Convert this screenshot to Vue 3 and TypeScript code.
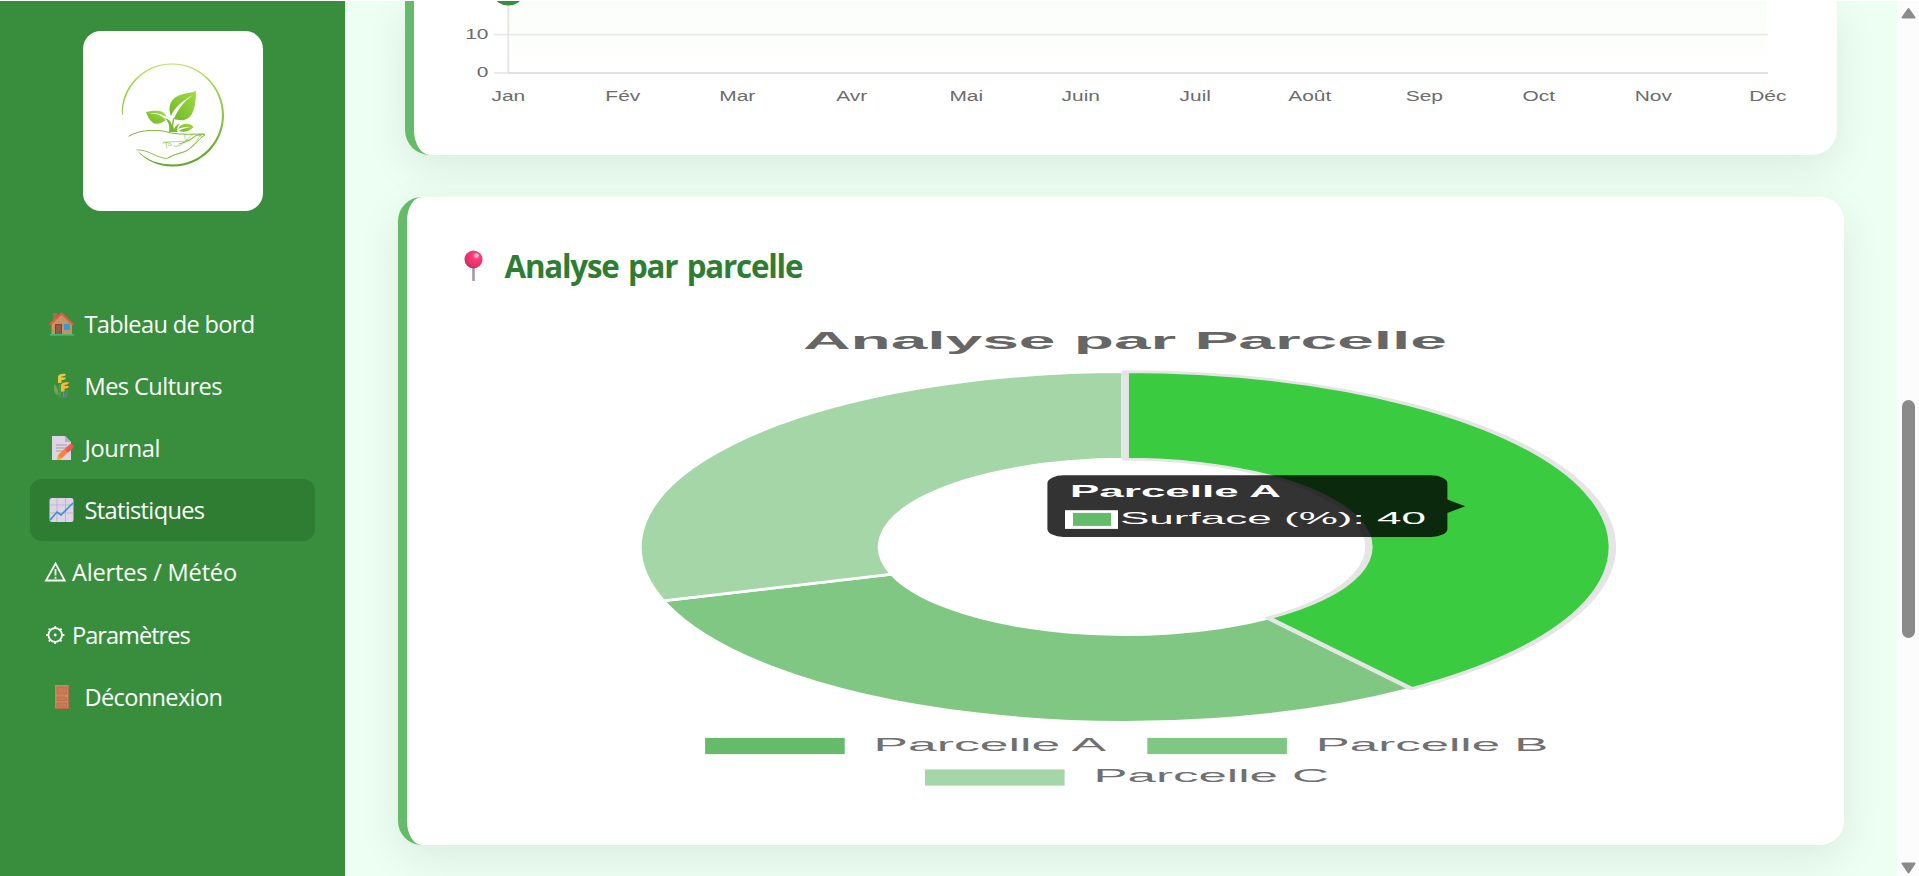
<script setup lang="ts">
interface MenuItem { id: string; label: string; spacing: number; plain?: boolean }
const menu: MenuItem[] = [
  { id: 'home', label: 'Tableau de bord', spacing: -0.66 },
  { id: 'wheat', label: 'Mes Cultures', spacing: -0.57 },
  { id: 'memo', label: 'Journal', spacing: -0.35 },
  { id: 'chart', label: 'Statistiques', spacing: -0.66 },
  { id: 'warn', label: 'Alertes / Météo', spacing: -0.2, plain: true },
  { id: 'gear', label: 'Paramètres', spacing: -1, plain: true },
  { id: 'door', label: 'Déconnexion', spacing: -0.66 },
]
const current = 'chart'
const months = ['Jan', 'Fév', 'Mar', 'Avr', 'Mai', 'Juin', 'Juil', 'Août', 'Sep', 'Oct', 'Nov', 'Déc']
const monthX = (i: number) => 94.3 + i * 114.5

const outer = 175.3
const inner = 87.7
function sector(from: number, to: number): string {
  const at = (r: number, t: number) => {
    const a = t * Math.PI * 2
    return `${(Math.sin(a) * r).toFixed(3)} ${(-Math.cos(a) * r).toFixed(3)}`
  }
  return `M${at(outer, from)}A${outer} ${outer} 0 0 1 ${at(outer, to)}L${at(inner, to)}A${inner} ${inner} 0 0 0 ${at(inner, from)}Z`
}
const slices = [
  { d: sector(0.4, 0.7), fill: '#81c784', stroke: '#fff' },
  { d: sector(0.7, 1), fill: '#a5d6a7', stroke: '#fff' },
  { d: sector(0, 0.4), fill: '#3bcb41', stroke: '#e5e5e5' },
]
const legend = [
  { name: 'Parcelle A', x: 298.1, y: 427.9, fill: '#66bb6a', w: 232.5 },
  { name: 'Parcelle B', x: 740.3, y: 427.9, fill: '#81c784', w: 232.5 },
  { name: 'Parcelle C', x: 518, y: 459.4, fill: '#a5d6a7', w: 235.5 },
]
</script>

<template>
  <div class="page">
    <aside class="sidebar">
      <div class="logo">
        <svg width="180" height="180" viewBox="0 0 180 180">
          <defs>
            <linearGradient id="ring" x1="0" y1="0" x2="0" y2="1">
              <stop offset="0" stop-color="#b6e35c" /><stop offset="1" stop-color="#5fa626" />
            </linearGradient>
            <linearGradient id="leaf" x1="1" y1="0" x2="0" y2="1">
              <stop offset="0" stop-color="#a4dc43" /><stop offset="1" stop-color="#6db529" />
            </linearGradient>
          </defs>
          <path fill="url(#ring)" d="M39 84C37 56 60 32.500 89 32.500C118 32.500 141 56 141 84C141 113 118 135.500 90 135.500C74 135.500 62 129 54 119.500C65 130 76 133.500 90 133.500C117 133.500 139 111 139 84C139 57 117 33.500 89 33.500C61 33.500 39.500 57 39.800 84Z" />
          <path fill="url(#leaf)" d="M113 60C113 76 110 87 101 89C97 89.500 94 89 91 88C94 80 100 71 110 64C99 70 91 77 88 85C84 76 88 67 97 64C103 62 108 62 113 60Z" />
          <path fill="url(#leaf)" d="M63 81C74 79 81 79 83.500 86C77 82 72 82 66 82C74 83 79 84 83 89C75 95 68 95 63 81Z" />
          <path fill="url(#leaf)" d="M110.500 96C107 92 99 91 95 98C99 96 103 96 107 96.500C102 97 98 98 96 100C101 102 107 100 110.500 96Z" />
          <path fill="#76bd2c" d="M86 101C87 94 85 90 82 87C86 88 88 91 89 94C89 90 90 87 92 86C90 92 90 95 91 98C93 94 95 93 97 93C94 95 94 98 94.500 101Z" />
          <g fill="none" stroke="#7dba38" stroke-width="1" stroke-linecap="round">
            <path d="M46 105C58 98 76 98 88 102C100 104 111 103 121 103" />
            <path d="M54 119C65 118 73 127 84 127.500C91 122 102 123 107 117C114 113 116 107 122 104C119 102 113 104 110 107C105 111 101 111 96 113" stroke-width=".9" />
            <path d="M80 112C91 109 102 113 109 107C113 104 116 103 120 106M84 111C82 113 84 115 84 117M81 111C90 112 91 116 85 114M91 115C99 117 102 109 110 103M86 127C94 121 105 122 109 115C113 112 115 107 118 104M102 104C101 108 103 110 107 109" stroke-width=".6" />
          </g>
        </svg>
      </div>
      <nav>
        <a v-for="m in menu" :key="m.id" class="item" :class="{ active: m.id === current, plain: m.plain }">
          <svg class="icon" width="28" height="28" viewBox="0 0 28 28">
            <g v-if="m.id === 'home'">
              <path fill="#a86d4d" d="M5 3h4v8H5z" /><path fill="#cb9163" d="M13.500 4L24 14v11H3.500V14z" />
              <path fill="#74473f" d="M7 14h7v11H7z" /><path fill="#955b4b" d="M8 15h5v9H8z" />
              <path fill="#279fe5" d="M16 14h6v6h-6z" /><path d="M2.500 14L13.500 3.500L24.500 14" fill="none" stroke="#ec5541" stroke-width="2.200" stroke-linecap="round" />
              <path fill="#3abe70" d="M2 24h24v1.700H2z" />
            </g>
            <g v-else-if="m.id === 'wheat'">
              <path d="M12 25.500V12M15.500 25.500V16" stroke="#5e9f62" stroke-width="1.200" />
              <path d="M6 12.500c3 1 4 4 4.500 11c-3-1-4.500-3-4.500-6z" fill="#6ea551" />
              <path d="M20 18.500c-3 .5-4 3-4.500 7.500h3c1-1.500 1.500-4 1.500-7.500z" fill="#4f8589" />
              <path d="M10 9.500V4.500C11 1.500 15 1.500 18 2C17.500 4 16 4.300 13.500 4.500V5.500H18C17.500 7.500 16 8 13.500 8V11H10z" fill="#edc73e" />
              <path d="M13 17.500V13C14 10 18 10 21 10.300C20.500 12.300 19 12.800 16.500 13V14H21C20.500 16 19 16.500 16.500 16.500V19.500H13z" fill="#f6b93c" />
            </g>
            <g v-else-if="m.id === 'memo'">
              <path fill="#ded4e4" d="M4 2h13l6 6v18H4z" /><path fill="#b9afc2" d="M17 2l6 6h-6z" />
              <path d="M8 11h11M8 14h11M8 17h7" stroke="#a69cad" stroke-width="1.200" />
              <path d="M11.500 23L21 14" stroke="#f98336" stroke-width="5" /><path d="M20 15.500L23 12.500" stroke="#f05951" stroke-width="5" stroke-linecap="round" />
              <path fill="#f1a33b" d="M9 26l1-5l4 4z" />
            </g>
            <g v-else-if="m.id === 'chart'">
              <rect x="1.500" y="2" width="24" height="24" rx="2.500" fill="#ddd4e5" />
              <path d="M9 2v24M17.500 2v24M2 9h23.500M2 17h23.500" stroke="#bfb5cb" stroke-width="1" />
              <path d="M2 24L9 16L13 19L25 7" fill="none" stroke="#358ddd" stroke-width="1.600" />
            </g>
            <g v-else-if="m.id === 'warn'" fill="none" stroke="#fff" stroke-width="1.800">
              <path d="M11.500 5.500L20.700 22.500H2z" /><path d="M11.500 11v6.500M11.500 18.800v2" />
            </g>
            <g v-else-if="m.id === 'gear'" fill="none" stroke="#fff" stroke-width="1.800">
              <circle cx="11.200" cy="14" r="6.800" />
              <path d="M11.200 7.200V5M11.200 23v-2.200M4.400 14H2M20.400 14H18M6.400 9.200L4.800 7.600M16 9.200l1.600-1.600M6.400 18.800l-1.600 1.600M16 18.800l1.600 1.600" /><circle cx="11.200" cy="14" r="1.400" fill="#fff" stroke="none" />
            </g>
            <g v-else>
              <path fill="#b9694c" d="M7 2h14v24H7z" /><path fill="#d08560" d="M7 2h13v23H7z" />
              <path d="M9 4h9.500v7H9zM9 14h9.500v3.500H9zM9 20h9.500v4H9z" fill="#c87955" stroke="#b56a4e" stroke-width=".7" />
              <circle cx="18.500" cy="13" r="1" fill="#f09b39" />
            </g>
          </svg>
          <span class="label" :style="{ letterSpacing: m.spacing + 'px' }">{{ m.label }}</span>
        </a>
      </nav>
    </aside>

    <main class="content">
      <section class="card line-card">
        <svg width="1423" height="154" viewBox="0 1 1423 154">
          <defs>
            <linearGradient id="area" x1="0" y1="0" x2="0" y2="1">
              <stop offset="0" stop-color="#fafdf8" /><stop offset="1" stop-color="#fff" />
            </linearGradient>
          </defs>
          <path fill="url(#area)" d="M94 0H1353V73H94z" />
          <path d="M80 34.700H1354M80 73H94" stroke="#eaeaea" stroke-width="1.800" />
          <path d="M94.300 0V73" stroke="#e3e5e3" stroke-width="1.800" />
          <path d="M94 73H1354" stroke="#d8d8d8" stroke-width="1.400" />
          <ellipse cx="94.300" cy="-4" rx="13.500" ry="9.500" fill="#388e3c" />
          <g class="ticks">
            <text transform="translate(74.500 38.700) scale(1.350 1)" text-anchor="end">10</text>
            <text transform="translate(74.500 76.900) scale(1.350 1)" text-anchor="end">0</text>
            <text v-for="(m, i) in months" :key="m" :transform="`translate(${monthX(i)} 101.300) scale(1.350 1)`" text-anchor="middle">{{ m }}</text>
          </g>
        </svg>
      </section>

      <section class="card donut-card">
        <h2>
          <svg class="pin" width="20" height="34" viewBox="0 0 20 34">
            <defs><radialGradient id="ball" cx=".65" cy=".3" r=".75"><stop offset="0" stop-color="#ff6f9d" /><stop offset=".3" stop-color="#f93a76" /><stop offset=".7" stop-color="#ee2f6b" /><stop offset="1" stop-color="#a83c5b" /></radialGradient></defs>
            <path fill="#a394b4" d="M8.200 18h2.600v14H8.200z" /><circle cx="9.500" cy="10.500" r="9" fill="url(#ball)" /><circle cx="12.500" cy="6.500" r="2.300" fill="#ffb5cb" />
          </svg>
          <span>Analyse par parcelle</span>
        </h2>
        <svg class="donut" width="1437" height="535" viewBox="0 0 1437 535">
          <text class="title" transform="translate(396 39.200)" textLength="644" lengthAdjust="spacingAndGlyphs">Analyse par Parcelle</text>
          <g transform="translate(718.200 236.900) scale(2.779 1)">
            <path v-for="s in slices" :key="s.d" :d="s.d" :fill="s.fill" :stroke="s.stroke" stroke-width="2.700" stroke-linejoin="round" />
          </g>
          <g v-for="l in legend" :key="l.name">
            <rect :x="l.x" :y="l.y" width="139.600" height="16.200" :fill="l.fill" />
            <text class="legend" :x="l.x + 168.500" :y="l.y + 13" :textLength="l.w" lengthAdjust="spacingAndGlyphs">{{ l.name }}</text>
          </g>
          <path fill="rgba(0,0,0,.8)" d="M656.500 165.300H1024A16.500 8 0 0 1 1040.400 173.300V189.500L1058.300 196.200L1040.400 202.900V218.900A16.500 8 0 0 1 1024 226.900H656.500A16 8 0 0 1 640.400 218.900V173.300A16 8 0 0 1 656.500 165.300Z" />
          <text class="tip bold" x="663" y="187.200" textLength="211" lengthAdjust="spacingAndGlyphs">Parcelle A</text>
          <rect x="658" y="200.200" width="53" height="18.700" fill="#fff" />
          <rect x="666" y="202.900" width="38" height="13" fill="#66bb6a" />
          <text class="tip" x="713" y="213.900" textLength="306" lengthAdjust="spacingAndGlyphs">Surface (%): 40</text>
        </svg>
      </section>
    </main>

    <div class="scrollbar">
      <svg width="22" height="875" viewBox="0 1 22 875">
        <path fill="#8b8b8b" stroke="#8b8b8b" stroke-width="2" stroke-linejoin="round" d="M11.500 9L17.500 17.500H5.500zM5.500 863.500H17.500L11.500 872.500z" />
        <rect x="5" y="400" width="13" height="238" rx="6.500" fill="#8b8b8b" />
      </svg>
    </div>
  </div>
</template>

<style>
html, body { overflow: hidden; }
</style>

<style scoped>
.page { box-sizing: border-box; display: flex; width: 1919px; height: 876px; overflow: hidden; background: #edfff3; border-top: 1px solid #fff; font-family: "Open Sans", "Noto Sans", sans-serif; }
svg { display: block; flex: none; }
.sidebar { flex: none; width: 345px; background: #388e3c; position: relative; z-index: 1; }
.logo { width: 180px; height: 180px; margin: 30px 0 0 83px; border-radius: 18px; background: #fff; }
nav { display: flex; flex-direction: column; margin: 82px 30px 0; }
.item { display: flex; align-items: center; box-sizing: border-box; height: 62.100px; padding-left: 18px; gap: 8.500px; border-radius: 12px; color: #fff; font-size: 23.600px; }
.item.plain { padding-left: 14px; gap: 0; }
.active { background: #2e7d32; }
.label { line-height: 32px; white-space: nowrap; }
.content { flex: 1; min-width: 0; display: flex; flex-direction: column; overflow: hidden; }
.card { box-sizing: border-box; flex: none; background: #fff; border-left: 9px solid #66bb6a; box-shadow: 0 13px 44px rgba(0, 0, 0, .08); }
.line-card { width: 1432px; height: 154px; margin-left: 60px; border-radius: 0 0 25px 25px; }
.donut-card { width: 1446px; height: 648px; margin: 42px 0 0 53px; border-radius: 24px; }
h2 { display: flex; align-items: center; height: 44px; margin: 0; padding: 47px 0 22px 57px; gap: 20.500px; color: #2e7d32; font-size: 31.300px; line-height: 44px; font-weight: 700; letter-spacing: -1.200px; word-spacing: 2.500px; white-space: nowrap; }
.ticks text { font: 15.500px "Liberation Sans", sans-serif; fill: #6c6c6c; }
.title { font: bold 23.900px "Liberation Sans", sans-serif; fill: #666; }
.legend { font: 18.500px "Liberation Sans", sans-serif; fill: #707070; }
.tip { font: 15.700px "Liberation Sans", sans-serif; fill: #fff; }
.tip.bold { font-weight: bold; }
.scrollbar { flex: none; width: 22px; background: #fcfcfc; }
</style>
